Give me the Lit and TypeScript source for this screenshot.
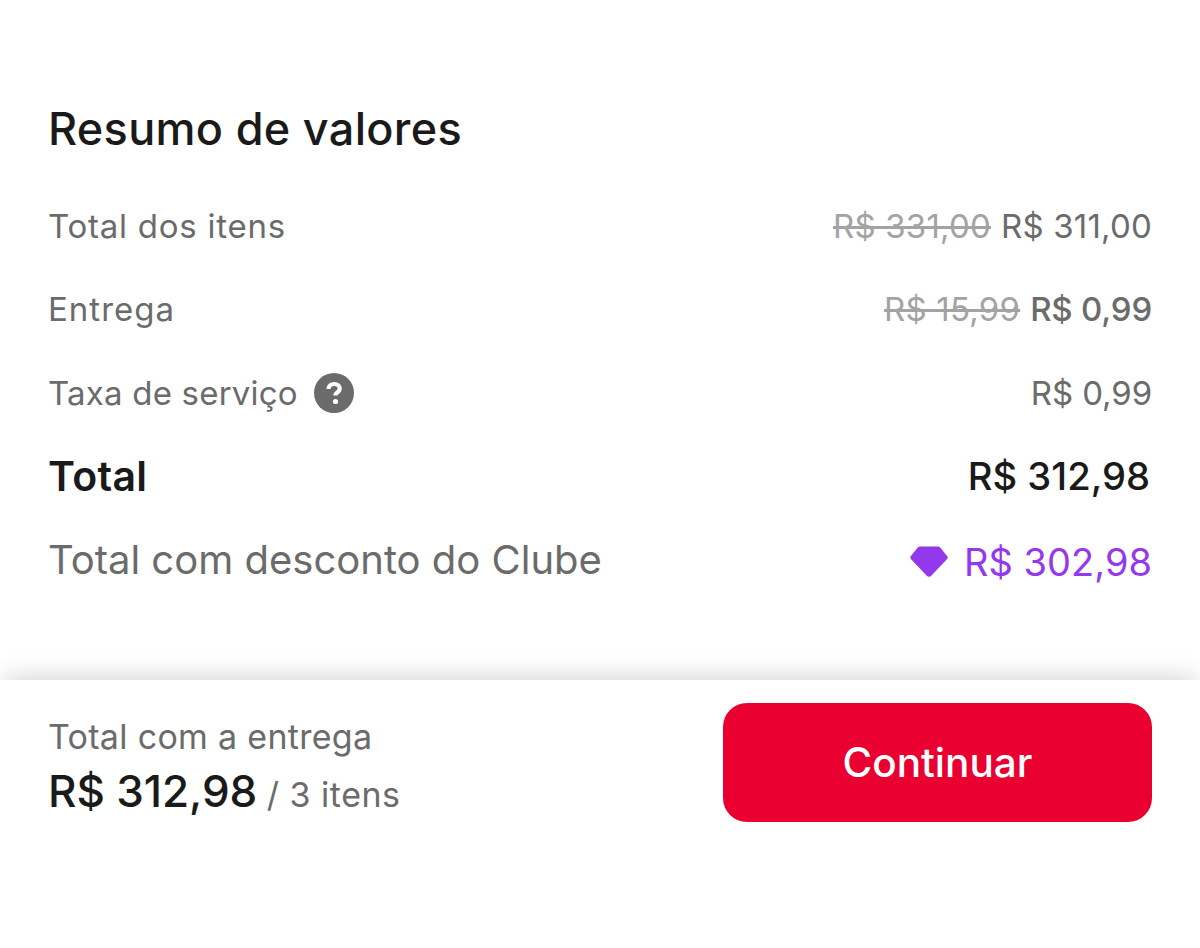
import { LitElement, html, css } from "lit";
import { customElement } from "lit/decorators.js";

@customElement("app-root")
export class AppRoot extends LitElement {
  static styles = css`
    :host { display: block; width: 1200px; height: 948px; background: #fff; overflow: hidden;
      font-family: Inter, "Liberation Sans", sans-serif; color: #6b6b6b; }
    .summary { height: 680px; box-sizing: border-box; padding: 100px 48px 0 48px; }
    h1 { margin: 0 0 27px; font-size: 45px; line-height: 57px; font-weight: 550; color: #1a1a1a; letter-spacing: 0.32px; }
    .row { display: flex; justify-content: space-between; align-items: center; height: 83.5px; font-size: 33px; }
    .label { display: flex; align-items: center; gap: 16px; }
    .wide { letter-spacing: 0.75px; }
    .wider { letter-spacing: 1px; }
    .mid { letter-spacing: 0.2px; }
    .value { display: flex; align-items: center; gap: 10px; letter-spacing: 0.2px; }
    .plain { letter-spacing: -0.1px; }
    s { color: #a3a3a3; text-decoration-thickness: 3px; }
    .strong { font-weight: 500; letter-spacing: -0.2px; }
    .total { color: #1a1a1a; font-weight: 500; }
    .total .label { font-size: 41px; font-weight: 600; letter-spacing: 0.3px; }
    .total .value { font-size: 38.200px; letter-spacing: 0; margin-right: 2px; }
    .club .label { font-size: 40px; }
    .club .value { font-size: 38px; letter-spacing: 0; color: #9438ee; gap: 16px; padding-top: 4px; }
    .footer { height: 268px; box-sizing: border-box; padding: 23px 48px 0 48px; display: flex; justify-content: space-between; align-items: flex-start;
      box-shadow: 0 -6px 24px -4px rgba(0,0,0,0.18); position: relative; background: #fff; }
    .due { padding-top: 11px; }
    .due-label { font-size: 34px; line-height: 46px; letter-spacing: 0.3px; }
    .due-value { font-size: 44px; line-height: 62px; font-weight: 500; color: #1a1a1a; letter-spacing: -0.1px; }
    .due-value span { font-size: 34px; font-weight: 400; color: #6b6b6b; margin-left: -2px; letter-spacing: 0.5px; }
    button { width: 429px; height: 119px; border: 0; border-radius: 24px; background: #ea0030; color: #fff;
      font: 500 40.500px Inter, "Liberation Sans", sans-serif; }
  `;
  render() {
    return html`
      <section class="summary">
        <h1>Resumo de valores</h1>
        <div class="row"><span class="label wide">Total dos itens</span><span class="value"><s>R$ 331,00</s><span>R$ 311,00</span></span></div>
        <div class="row"><span class="label wider">Entrega</span><span class="value"><s>R$ 15,99</s><span class="strong">R$ 0,99</span></span></div>
        <div class="row"><span class="label mid">Taxa de serviço
          <svg width="40" height="40" viewBox="0 0 40 40"><circle cx="20" cy="20" r="20" fill="#6b6b6b"/><path d="M14.500 16c0-3 2.500-5 5.700-5 3.300 0 5.500 1.900 5.500 4.600 0 2.200-1.200 3.200-2.700 4.200-1.200.8-1.700 1.400-1.700 2.800" fill="none" stroke="#fff" stroke-width="4.200"/><circle cx="21.500" cy="28.500" r="2.600" fill="#fff"/></svg>
        </span><span class="value plain">R$ 0,99</span></div>
        <div class="row total"><span class="label">Total</span><span class="value">R$ 312,98</span></div>
        <div class="row club"><span class="label">Total com desconto do Clube</span><span class="value">
          <svg width="38" height="31" viewBox="0 0 38 31"><path d="M10 .5h18a3 3 0 0 1 2.400 1.200l6.700 8.300a2.500 2.500 0 0 1-.2 3.300L21.500 29.500a3.500 3.500 0 0 1-5 0L1.100 13.300a2.500 2.500 0 0 1-.2-3.300l6.700-8.300A3 3 0 0 1 10 .5z" fill="#9438ee"/></svg>
          R$ 302,98</span></div>
      </section>
      <footer class="footer">
        <div class="due"><div class="due-label">Total com a entrega</div><div class="due-value">R$ 312,98 <span>/ 3 itens</span></div></div>
        <button>Continuar</button>
      </footer>`;
  }
}
